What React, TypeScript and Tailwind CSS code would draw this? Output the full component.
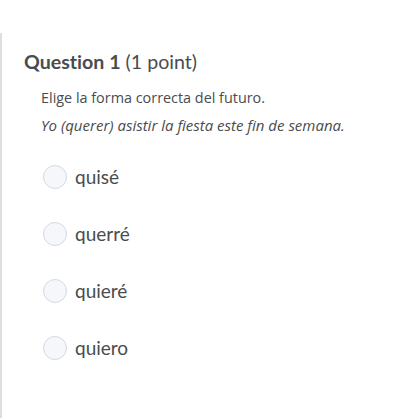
export default function App() {
  const options = ['quisé', 'querré', 'quieré', 'quiero'];

  return (
    <div
      className="w-[410px] h-[418px] bg-white pt-[33px] overflow-hidden [font-variant-ligatures:none]"
      style={{ fontFamily: 'Lato, "Noto Sans", sans-serif' }}
    >
      <div className="h-[385px] border-l-2 border-[#dedede] pl-[22px] pt-[16px] text-[#494c4e]">
        <h2 className="text-[19.6px] leading-[26px]">
          <span className="font-bold">Question 1</span> <span>(1 point)</span>
        </h2>
        <div className="pl-[17px] pt-[13px]" style={{ fontFamily: '"Open Sans", sans-serif' }}>
          <p className="text-[14.4px] leading-[20px]">Elige la forma correcta del futuro.</p>
          <p className="text-[15px] leading-[20px] italic mt-[7px]">
            Yo (querer) asistir la fiesta este fin de semana.
          </p>
          <div className="mt-[30px] flex flex-col gap-[33px]" style={{ fontFamily: 'Lato, sans-serif' }}>
            {options.map((opt) => (
              <label key={opt} className="flex items-center gap-[8px] h-[24px]">
                <span className="w-[24px] h-[24px] ml-[2px] rounded-full border border-[#d3d9e3] bg-[#f5f7fa]" />
                <span className="text-[19px] leading-[24px]">{opt}</span>
              </label>
            ))}
          </div>
        </div>
      </div>
    </div>
  );
}
